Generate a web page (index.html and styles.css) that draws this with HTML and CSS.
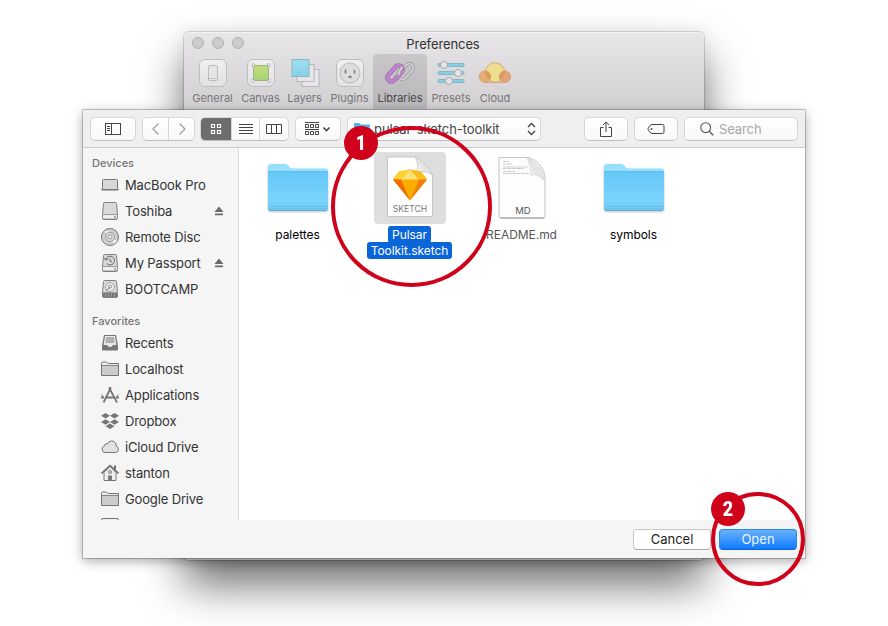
FILE: index.html
```html
<!DOCTYPE html>
<html lang="en">
<head>
<meta charset="utf-8">
<title>Preferences</title>
<link rel="stylesheet" href="styles.css">
</head>
<body>
<svg class="defs" width="0" height="0">
  <defs>
    <linearGradient id="gFolder" x1="0" y1="0" x2="0" y2="1"><stop offset="0" stop-color="#64c7f6"/><stop offset=".75" stop-color="#7bd3fc"/><stop offset="1" stop-color="#6fc8f2"/></linearGradient>
    <linearGradient id="gTile" x1="0" y1="0" x2="0" y2="1"><stop offset="0" stop-color="#f1eff1"/><stop offset="1" stop-color="#e2e0e2"/></linearGradient>
    <linearGradient id="gBlue" x1="0" y1="0" x2="0" y2="1"><stop offset="0" stop-color="#a0deee"/><stop offset="1" stop-color="#87cfea"/></linearGradient>
    <linearGradient id="gGreen" x1="0" y1="0" x2="0" y2="1"><stop offset="0" stop-color="#c3de7d"/><stop offset="1" stop-color="#a6d378"/></linearGradient>
    <linearGradient id="gFold" x1="0" y1="1" x2="1" y2="0"><stop offset="0" stop-color="#fff"/><stop offset=".5" stop-color="#e2e2e2"/><stop offset="1" stop-color="#f6f6f6"/></linearGradient>
    <symbol id="folderBig" viewBox="0 0 62 52">
      <path d="M1 4q0-3 3-3h14q2 0 3 1.500l1.500 2q.7 1 2 1H58q3 0 3 3V20H1z" fill="#96dfff"/>
      <path d="M1 9.500q0-1.500 1.500-1.500h57q1.500 0 1.500 1.500V45.500q0 2-2 2H3q-2 0-2-2z" fill="url(#gFolder)"/>
      <path d="M1 8.500h60M1 43.500h60M1 45.500h60" stroke="#57b5e3" stroke-width=".7" opacity=".7"/>
      <path d="M2 47.500h58" stroke="#5caed6" stroke-width="1"/>
    </symbol>
    <symbol id="folder" viewBox="0 0 18 18">
      <path d="M.5 15.500v-12q0-1.500 1-1.500h4l1.500 1.500h10.500v12z" fill="#eee" stroke="#737373"/>
      <path d="M1 5.500h16v9.500H1z" fill="#cbcbcb"/><path d="M.5 5.500h17" stroke="#858585"/>
    </symbol>
    <symbol id="drive" viewBox="0 0 18 18">
      <path d="M2.500 1.500q.2-1 1.200-1h10.600q1 0 1.200 1l1 11.500v3q0 1.500-1.500 1.500h-12q-1.500 0-1.500-1.500v-3z" fill="#d9d9d9" stroke="#808080"/>
      <path d="M1.500 13.500q0-.9 1-.9h13q1 0 1 .9v2q0 1.500-1.500 1.500h-12q-1.500 0-1.500-1.500z" fill="#f2f2f2" stroke="#808080" stroke-width=".8"/>
      <path d="M13 15h2" stroke="#555"/>
    </symbol>
    <symbol id="eject" viewBox="0 0 10 10"><path d="M5 .5 9.500 6H.5zM1 7.500h8v1.800H1z" fill="#6b6b6b"/></symbol>
  </defs>
</svg>

<main class="desktop">
  <section class="prefs">
    <header class="titlebar"><i class="light"></i><i class="light"></i><i class="light"></i><h1>Preferences</h1></header>
    <nav class="tabs">
      <div class="tab w1"><svg width="30" height="30"><rect x="1.500" y="1.500" width="27" height="27" rx="5.500" fill="url(#gTile)" stroke="#bebcbe"/><rect x="10.500" y="7.500" width="9" height="15" rx="1.500" fill="#e6e5e6" stroke="#bbb"/><path d="M11 20.500h8" stroke="#c6c6c6"/></svg><span>General</span></div>
      <div class="tab w2"><svg width="30" height="30"><rect x="1.500" y="1.500" width="27" height="27" rx="5.500" fill="url(#gTile)" stroke="#bebcbe"/><rect x="7.500" y="7.500" width="15" height="15" fill="url(#gGreen)" stroke="#9bb57b"/><g fill="#f4f4f4" stroke="#aaa" stroke-width=".7"><rect x="6" y="6" width="2.500" height="2.500"/><rect x="21.500" y="6" width="2.500" height="2.500"/><rect x="6" y="21.500" width="2.500" height="2.500"/><rect x="21.500" y="21.500" width="2.500" height="2.500"/></g></svg><span>Canvas</span></div>
      <div class="tab w3"><svg width="30" height="30"><g stroke="#b8b6b8" fill="#e8e6e8"><rect x="12" y="11.500" width="17" height="17"/><rect x="7" y="6.500" width="17" height="17"/></g><rect x="2" y="1.500" width="17" height="17" fill="url(#gBlue)" stroke="#88b7c8"/></svg><span>Layers</span></div>
      <div class="tab w4"><svg width="30" height="30"><rect x="1.500" y="1.500" width="27" height="27" rx="5.500" fill="url(#gTile)" stroke="#bebcbe"/><circle cx="15" cy="15" r="10" fill="#dedcde" stroke="#bcbabc"/><path d="M10.500 11.500v4M19.500 12v3.500" stroke="#777" stroke-width="1.500"/><path d="M13.300 20v-1.500q1.700-2 3.400 0V20z" fill="#858385"/></svg><span>Plugins</span></div>
      <div class="tab w5 on"><svg width="30" height="30"><g fill="none"><rect x="-9" y="-4" width="18" height="8" rx="4" transform="translate(21 13.500) rotate(-48)" stroke="#969496" stroke-width="3.400"/><rect x="-9" y="-4" width="18" height="8" rx="4" transform="translate(21 13.500) rotate(-48)" stroke="#d2d0d2" stroke-width="2"/><rect x="-9.500" y="-4" width="19" height="8" rx="4" transform="translate(10 15.500) rotate(-48)" stroke="#9c64ae" stroke-width="4.400"/><rect x="-9.500" y="-4" width="19" height="8" rx="4" transform="translate(10 15.500) rotate(-48)" stroke="#c084d0" stroke-width="3"/><path d="M14 17q-1-2 1-5l2.500-3.200" stroke="#969496" stroke-width="3.400"/><path d="M14 17q-1-2 1-5l2.500-3.200" stroke="#d2d0d2" stroke-width="2"/></g></svg><span>Libraries</span></div>
      <div class="tab w6"><svg width="30" height="30"><g fill="#87cfe3" stroke="#79afc0" stroke-width=".8"><rect x="2" y="5.500" width="26" height="3" rx="1"/><rect x="2" y="13.500" width="26" height="3" rx="1"/><rect x="2" y="21.500" width="26" height="3" rx="1"/></g><g fill="#e8e6e8" stroke="#aaa8aa"><circle cx="8" cy="7" r="3.500"/><circle cx="22" cy="15" r="3.500"/><circle cx="13" cy="23" r="3.500"/></g></svg><span>Presets</span></div>
      <div class="tab w7"><svg width="34" height="30"><g stroke="#cf9f60" stroke-width=".8"><circle cx="17" cy="14.500" r="9.700" fill="#eedf90"/><circle cx="7" cy="18.700" r="5.700" fill="#e8ab74"/><circle cx="27" cy="18.700" r="5.700" fill="#e5a37a"/><path d="M7.500 13.100a5.700 5.700 0 0 1 3.700 9.200Q7.500 19 7.500 13.100zM26.500 13.100a5.700 5.700 0 0 0-3.700 9.200Q26.500 19 26.500 13.100z" fill="#dd9b5c"/></g><path d="M7 24.400h20" stroke="#cf9f60" stroke-width=".8"/></svg><span>Cloud</span></div>
    </nav>
  </section>

  <section class="dialog">
    <header class="bar">
      <div class="btn b1"><svg width="16" height="12"><rect x=".5" y=".5" width="15" height="11" fill="none" stroke="#444"/><path d="M6.500 1v10M2 3.500h3M2 5.500h3M2 7.500h3" stroke="#444"/></svg></div>
      <div class="btn b2"><span><svg width="8" height="12"><path d="M6.500 .5 1 6l5.500 5.500" class="chev"/></svg></span><span><svg width="8" height="12"><path d="M1.500 .5 7 6l-5.500 5.500" class="chev"/></svg></span></div>
      <div class="btn b3"><span class="active"><svg width="12" height="12"><path d="M1.500 1.500h3v3h-3zM7.500 1.500h3v3h-3zM1.500 7.500h3v3h-3zM7.500 7.500h3v3h-3z" fill="none" stroke="#fff" stroke-width="1.200"/></svg></span><span><svg width="14" height="12"><path d="M0 1.500h14M0 4.500h14M0 7.500h14M0 10.500h14" stroke="#444"/></svg></span><span><svg width="16" height="12"><path d="M.5 1.500h15v9H.5zM5.500 1.500v9M10.500 1.500v9" fill="none" stroke="#444"/></svg></span></div>
      <div class="btn b4"><svg width="26" height="14"><path d="M0 .5h14M0 7.500h14M.5 2.500h3v3h-3zM5.500 2.500h3v3h-3zM10.500 2.500h3v3h-3zM.5 9.500h3v3h-3zM5.500 9.500h3v3h-3zM10.500 9.500h3v3h-3z" fill="none" stroke="#444"/><path d="m18.500 5.500 3 3 3-3" fill="none" stroke="#444" stroke-width="1.600"/></svg></div>
      <div class="btn b5"><svg class="mini" width="16" height="14"><path d="M0 2q0-1 1-1h4l1.500 1.500H15q1 0 1 1V13H0z" fill="#4eb2e2"/><path d="M0 5h16v8H0z" fill="#70c9f2"/></svg><span class="path">pulsar-sketch-toolkit</span><svg class="updown" width="9" height="14"><path d="M1 5 4.500 1.500 8 5M1 9l3.500 3.500L8 9" fill="none" stroke="#444" stroke-width="1.400"/></svg></div>
      <div class="btn b6"><svg width="12" height="16"><path d="M3.500 6.500H.5v9h11v-9h-3M6 11V1M3 4l3-3 3 3" fill="none" stroke="#444"/></svg></div>
      <div class="btn b7"><svg width="18" height="12"><path d="M5 1.500h10.500q1.500 0 1.500 1.500v6q0 1.500-1.500 1.500H5Q3 10.500 .8 6 3 1.500 5 1.500z" fill="none" stroke="#444"/><circle cx="4.500" cy="6" r=".9" fill="#444"/></svg></div>
      <div class="btn b8"><svg width="14" height="14"><circle cx="5.700" cy="5.700" r="4.900" fill="none" stroke="#555" stroke-width="1.100"/><path d="m9.200 9.200 4 4" stroke="#555" stroke-width="1.300"/></svg><span>Search</span></div>
    </header>
    <div class="content">
      <aside class="side">
        <h2>Devices</h2>
        <div class="row"><svg width="18" height="18"><rect x="1.500" y="3.500" width="15" height="10" rx="1" fill="#d8d8d8" stroke="#777"/><path d="M0 13h18v.6q-.5 1-2 1H2q-1.500 0-2-1z" fill="#777"/></svg><span>MacBook Pro</span></div>
        <div class="row"><svg width="18" height="18"><use href="#drive"/></svg><span>Toshiba</span><svg class="ej" width="10" height="10"><use href="#eject"/></svg></div>
        <div class="row"><svg width="18" height="18"><circle cx="9" cy="9" r="8.500" fill="#cfcfcf" stroke="#777"/><path d="m9 9-6-6h4zM9 9l7 4-3 3z" fill="#f0f0f0"/><circle cx="9" cy="9" r="4.500" fill="#ddd" stroke="#888" stroke-width=".8"/><circle cx="9" cy="9" r="2" fill="#eee" stroke="#888" stroke-width=".8"/></svg><span>Remote Disc</span></div>
        <div class="row"><svg width="18" height="18"><use href="#drive"/><path d="M5 5a4.400 4.400 0 1 1 .8 4.500M3.200 4 4.800 6 7 5M9 4.500v2.500l2 1.300" fill="none" stroke="#666"/></svg><span>My Passport</span><svg class="ej" width="10" height="10"><use href="#eject"/></svg></div>
        <div class="row"><svg width="18" height="18"><use href="#drive"/><circle cx="9" cy="7" r="4.500" fill="#eaeaea" stroke="#999" stroke-width=".8"/><circle cx="9" cy="6.500" r="1.600" fill="none" stroke="#999"/><path d="m5 11 4-4" stroke="#888"/><path d="M1.500 13h15v4h-15z" fill="#777"/><path d="M4.500 13.500v3M7.500 13.500v3M10.500 13.500v3M13.500 13.500v3" stroke="#aaa" stroke-width=".8"/></svg><span>BOOTCAMP</span></div>
        <h2 class="second">Favorites</h2>
        <div class="row"><svg width="18" height="18"><path d="M3 1h12l2 10.500v4q0 1-1 1H2q-1 0-1-1v-4z" fill="#777"/><path d="M4 2h10l1.400 9h-3.400q-1 2-3 2t-3-2H2.600z" fill="#eaeaea"/><path d="M5 4h8M4.700 6h8.600M4.500 8h9" stroke="#777"/></svg><span>Recents</span></div>
        <div class="row"><svg width="18" height="18"><use href="#folder"/></svg><span>Localhost</span></div>
        <div class="row"><svg width="18" height="18"><path d="M8 1.500 16 16.500M10 1.500l-7.500 15" fill="none" stroke="#777" stroke-width="1.800"/><path d="M0 11.500h18" stroke="#777" stroke-width="2" stroke-dasharray="3 1 10 1"/><path d="M.5 8.500 2.500 11M17.500 8.500 15.500 11" fill="none" stroke="#777"/></svg><span>Applications</span></div>
        <div class="row"><svg width="18" height="18"><path d="m4.500 1 4.500 2.800-4.500 2.800L0 3.800zM13.500 1 18 3.800l-4.500 2.800L9 3.800zM4.500 7.200 9 10l-4.500 2.800L0 10zM13.500 7.200 18 10l-4.500 2.800L9 10zM9 11.500l4.500 2.800L9 17l-4.500-2.700z" fill="#777"/></svg><span>Dropbox</span></div>
        <div class="row"><svg width="18" height="18"><path d="M4 14.500h10.500a3.200 3.200 0 0 0 .8-6.200Q15 3 10.500 3 7.500 3 6.300 6 3.500 5 3.200 8.300A3.200 3.200 0 0 0 4 14.500z" fill="#e2e2e2" stroke="#737373"/></svg><span>iCloud Drive</span></div>
        <div class="row"><svg width="18" height="18"><path d="M3 8.500 9 2.500l6 6v8H3z" fill="#eee" stroke="#777"/><path d="M.5 9.500 9 1.500l8.500 8" fill="none" stroke="#6c6c6c" stroke-width="1.600"/><path d="M14 1.500v4" stroke="#6c6c6c" stroke-width="2"/><path d="M7 11.500h4V17H7z" fill="#777"/><circle cx="9" cy="8" r="1.500" fill="none" stroke="#777"/></svg><span>stanton</span></div>
        <div class="row"><svg width="18" height="18"><use href="#folder"/></svg><span>Google Drive</span></div>
        <div class="row"><svg width="18" height="18"><path d="M.5 18V4q0-1.500 1.500-1.500h14q1.500 0 1.500 1.500v14" fill="#eee" stroke="#737373"/></svg></div>
      </aside>
      <div class="files">
        <figure><div class="pic"><svg class="bigf" width="62" height="52"><use href="#folderBig"/></svg></div><figcaption>palettes</figcaption></figure>
        <figure class="sel"><div class="pic"><svg width="48" height="64"><path d="M1.500 1h28L46.500 19v41.500h-45z" fill="#fff" stroke="#bbb" stroke-width=".8"/><path d="M29.500 1Q33 9 31 16q8-2 15.500 3Q42 8 29.500 1z" fill="url(#gFold)" stroke="#bbb" stroke-width=".6"/><g transform="translate(0 -1.500)"><path d="M13 17 24 15l11 2 6 8-17 21L7 25z" fill="#fdad00"/><path d="m13 17-6 8h8l9-10z" fill="#fdd231"/><path d="m24 15-9 10h18z" fill="#fee177"/><path d="m35 17 6 8h-8l-9-10z" fill="#fdbd20"/><path d="m7 25 17 21-9-21z" fill="#ef6c00"/><path d="M41 25 24 46l9-21z" fill="#f08012"/></g><text x="24" y="56" text-anchor="middle" class="kind sketch">SKETCH</text></svg></div><figcaption><span>Pulsar<br>Toolkit.sketch</span></figcaption></figure>
        <figure class="dim"><div class="pic"><svg width="48" height="64"><path d="M1 1.500h30Q46 7 47 22v38.500q0 1.500-1.500 1.500h-43Q1 62 1 60.500z" fill="#fdfdfd" stroke="#b5b5b5" stroke-width=".8"/><path d="M29 1.500q4 9 4 18 6-3 13 5Q45 9 29 1.500z" fill="url(#gFold)" stroke="#c9c9c9" stroke-width=".5"/><path d="M5 5.500h6M5 8h9M5 11h25M5 12.500h21M5 15.500h12M5 17.500h26" stroke="#aaa" stroke-width=".6" stroke-dasharray="3 .7 5 .6"/><path d="M2 62h44" stroke="#999"/><text x="25" y="58" text-anchor="middle" class="kind">MD</text></svg></div><figcaption>README.md</figcaption></figure>
        <figure><div class="pic"><svg class="bigf" width="62" height="52"><use href="#folderBig"/></svg></div><figcaption>symbols</figcaption></figure>
      </div>
    </div>
    <footer class="foot"><button class="cancel">Cancel</button><button class="open">Open</button></footer>
  </section>

  <div class="ring one"></div><div class="num n1"><span>1</span></div>
  <div class="ring two"></div><div class="num n2"><span>2</span></div>
</main>
</body>
</html>
```
FILE: styles.css
```css
* { box-sizing: border-box; }
html, body { margin: 0; background: #fff; }
body { font: 13px/16px Inter, "Liberation Sans", sans-serif; color: #333; }
svg { display: block; flex: none; }
.defs { position: absolute; }
.desktop { position: relative; width: 888px; height: 626px; overflow: hidden; }

.prefs {
  position: absolute; left: 184px; top: 32px; width: 520px; height: 528px;
  border-radius: 5px; background: linear-gradient(#e8e6e8, #d1cfd1 78px, #cfcdcf);
  box-shadow: 0 0 0 1px rgba(0,0,0,.14), inset 0 1px #f4f3f4, 0 25px 44px rgba(0,0,0,.56), 0 0 16px rgba(0,0,0,.06);
}
.titlebar { position: relative; display: flex; gap: 8px; padding: 5px 0 0 8px; height: 22px; }
.light { width: 12px; height: 12px; border-radius: 50%; background: #cdcbcd; border: 1px solid #b4b2b4; }
.titlebar h1 { position: absolute; left: 0; right: 2px; top: 4px; margin: 0; font-size: 13px; font-weight: 400; text-align: center; color: #333; letter-spacing: -.1px; }
.tabs { display: flex; padding-left: 3px; }
.tab { height: 55px; padding-top: 4px; display: flex; flex-direction: column; align-items: center; font-size: 11px; color: #777577; border-radius: 4px 4px 0 0; }
.tab span { margin-top: 2px; }
.w1 { width: 51px; } .w2 { width: 45px; } .w3 { width: 43px; } .w4 { width: 47px; } .w5 { width: 54px; } .w6 { width: 48px; } .w7 { width: 40px; }
.tab.on { background: linear-gradient(#c9c7c9, #b8b6b8); color: #484648; }

.dialog {
  position: absolute; left: 83px; top: 110px; width: 722px; height: 448px;
  display: flex; flex-direction: column; background: #f5f5f5;
  box-shadow: 0 0 0 1px rgba(0,0,0,.2), 0 3px 11px rgba(0,0,0,.35);
}
.bar { display: flex; align-items: flex-start; height: 38px; padding: 7px 7px 0; background: #efefef; border-bottom: 1px solid #c9c9c9; }
.btn { height: 24px; display: flex; align-items: center; justify-content: center; border: 1px solid #d7d7d7; border-bottom-color: #bfbfbf; border-radius: 5px; background: linear-gradient(#fff, #f8f8f8); overflow: hidden; }
.btn > span { display: flex; align-items: center; justify-content: center; height: 100%; }
.b1 { width: 46px; } .b2 { width: 53px; margin-left: 6px; } .b3 { width: 89px; margin-left: 5px; } .b4 { width: 46px; margin-left: 6px; }
.b5 { width: 194px; margin-left: 6px; justify-content: flex-start; padding-left: 6px; }
.b6 { width: 44px; margin-left: 43px; } .b7 { width: 44px; margin-left: 6px; } .b8 { width: 114px; margin-left: 6px; gap: 5px; color: #a8a8a8; justify-content: flex-start; padding-left: 15px; letter-spacing: -.1px; }
.b2 span { flex: 1; } .b2 span + span, .b3 span + span { border-left: 1px solid #d7d7d7; }
.b3 span { width: 28px; flex: none; } .b3 span:last-child { flex: 1; }
.b3 .active { width: 31px; height: 24px; margin-left: -1px; background: #6d6d6d; }
.chev { fill: none; stroke: #aaa; stroke-width: 1.500; }
.b5 .path { margin-left: 4px; color: #444; letter-spacing: -.08px; } .updown { margin-left: auto; margin-right: 4px; }

.content { display: flex; height: 372px; }
.side { width: 156px; padding-top: 6px; border-right: 1px solid #dcdcdc; overflow: hidden; }
.side h2 { margin: 0; padding-left: 9px; height: 18px; font-size: 11px; line-height: 18px; font-weight: 500; color: #747474; }
.side .second { margin-top: 10px; }
.row { display: flex; align-items: center; height: 26px; padding-left: 18px; gap: 6px; white-space: nowrap; letter-spacing: -.14px; }
.row .ej { margin-left: auto; margin-right: 14px; }
.files { flex: 1; display: grid; grid-template-columns: repeat(4, 112px); padding: 4px 0 0 3px; align-content: start; background: #fff; }
figure { margin: 0; display: flex; flex-direction: column; align-items: center; }
.pic { width: 72px; height: 72px; display: flex; align-items: center; justify-content: center; border-radius: 4px; }
.bigf { margin-top: 2px; filter: drop-shadow(0 1px 1px rgba(0,0,0,.25)); }
.sel .pic { background: #dedede; }
figcaption { margin: 3px 1px 0 0; font-size: 12px; text-align: center; color: #000; letter-spacing: -.05px; }
.sel figcaption span { background: #0a65d9; color: #fff; padding: 1px 4px; border-radius: 3px; box-decoration-break: clone; -webkit-box-decoration-break: clone; }
.dim figcaption { color: #555; }
.kind { font: 9.500px Inter, sans-serif; fill: #555; }
.sketch { fill: #777; font-size: 8.600px; }
.foot { display: flex; gap: 8px; justify-content: flex-end; padding: 9px 8px 0 0; }
.foot button { width: 78px; height: 21px; padding: 0; font: 13px/19px Inter, sans-serif; border-radius: 4px; }
.cancel { border: 1px solid #c7c7c7; border-bottom-color: #aaa; background: #fff; color: #222; }
.open { border: 1px solid #2a82ec; border-bottom-color: #1062df; background: linear-gradient(#69b1fa, #0e7bff); color: #e9f4ff; }

.ring { position: absolute; border: 4px solid #d0021b; border-radius: 50%; }
.one { left: 331px; top: 126px; width: 161px; height: 161px; }
.two { left: 711px; top: 492px; width: 94px; height: 94px; }
.num { position: absolute; width: 34px; height: 34px; border-radius: 50%; background: #d0021b; color: #fff; font: 900 21px/34px Roboto, sans-serif; text-align: center; }
.num span { display: block; transform: scaleX(.85); }
.n1 { left: 344px; top: 126px; }
.n2 { left: 711px; top: 492px; }
```
